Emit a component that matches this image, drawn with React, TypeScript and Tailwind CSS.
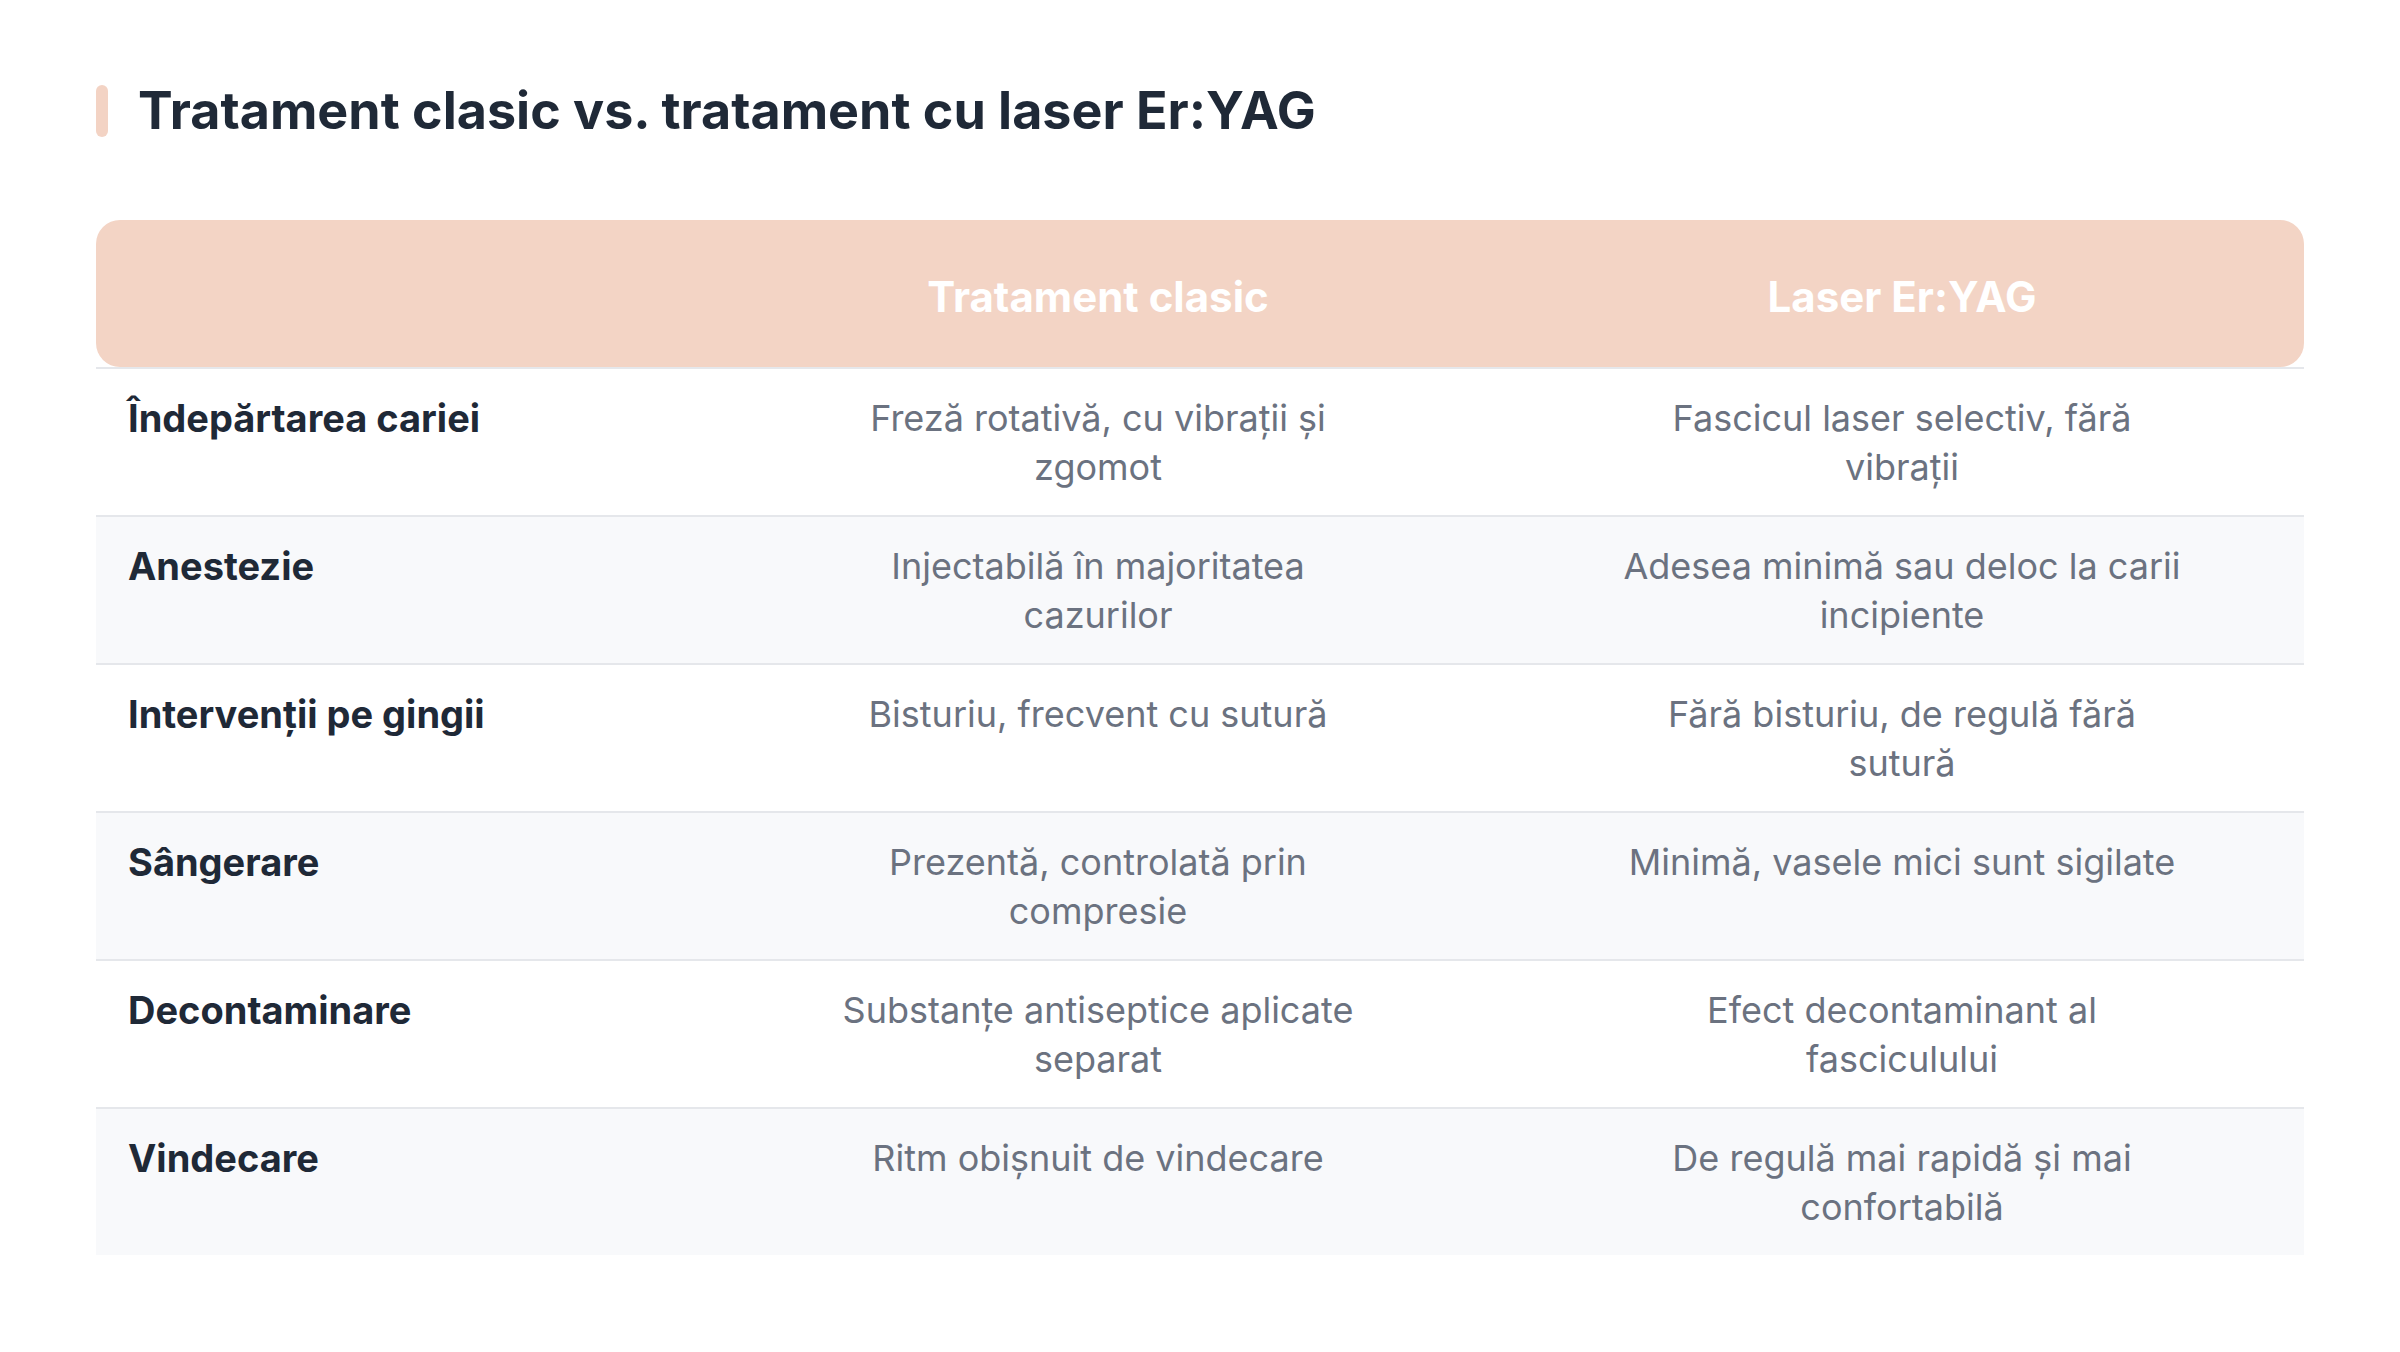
const rows = [
  {
    label: "Îndepărtarea cariei",
    classic: "Freză rotativă, cu vibrații și zgomot",
    laser: "Fascicul laser selectiv, fără vibrații",
  },
  {
    label: "Anestezie",
    classic: "Injectabilă în majoritatea cazurilor",
    laser: "Adesea minimă sau deloc la carii incipiente",
  },
  {
    label: "Intervenții pe gingii",
    classic: "Bisturiu, frecvent cu sutură",
    laser: "Fără bisturiu, de regulă fără sutură",
  },
  {
    label: "Sângerare",
    classic: "Prezentă, controlată prin compresie",
    laser: "Minimă, vasele mici sunt sigilate",
  },
  {
    label: "Decontaminare",
    classic: "Substanțe antiseptice aplicate separat",
    laser: "Efect decontaminant al fasciculului",
  },
  {
    label: "Vindecare",
    classic: "Ritm obișnuit de vindecare",
    laser: "De regulă mai rapidă și mai confortabilă",
  },
];

export default function App() {
  return (
    <div
      className="min-h-screen bg-white px-24 pt-[81px] pb-24"
      style={{ fontFamily: "Inter, 'Noto Sans', sans-serif" }}
    >
      <div className="flex items-center gap-[30px]">
        <span className="h-[52px] w-3 rounded-full bg-[#f3d3c4]" />
        <h1 className="text-[52px] font-bold leading-[60px] text-[#1f2937]">
          Tratament clasic vs. tratament cu laser Er:YAG
        </h1>
      </div>

      <div className="mt-[79px]">
        <div className="grid h-[147px] grid-cols-[600px_1fr_1fr] items-center rounded-[24px] bg-[#f3d4c5] pt-[6px] text-[42px] font-bold text-white">
          <div />
          <div className="text-center">Tratament clasic</div>
          <div className="text-center">Laser Er:YAG</div>
        </div>

        {rows.map((row, i) => (
          <div
            key={row.label}
            className={`grid h-[148px] grid-cols-[600px_1fr_1fr] border-t-2 border-[#e5e7eb] pt-[25px] ${
              i % 2 === 1 ? "bg-[#f8f9fb]" : "bg-white"
            }`}
          >
            <div className="pl-8 text-[38px] font-bold leading-[49px] text-[#1f2937]">
              {row.label}
            </div>
            <div className="mx-auto max-w-[564px] text-center text-[36px] leading-[49px] text-[#6b7280]">
              {row.classic}
            </div>
            <div className="mx-auto max-w-[564px] text-center text-[36px] leading-[49px] text-[#6b7280]">
              {row.laser}
            </div>
          </div>
        ))}
      </div>
    </div>
  );
}
